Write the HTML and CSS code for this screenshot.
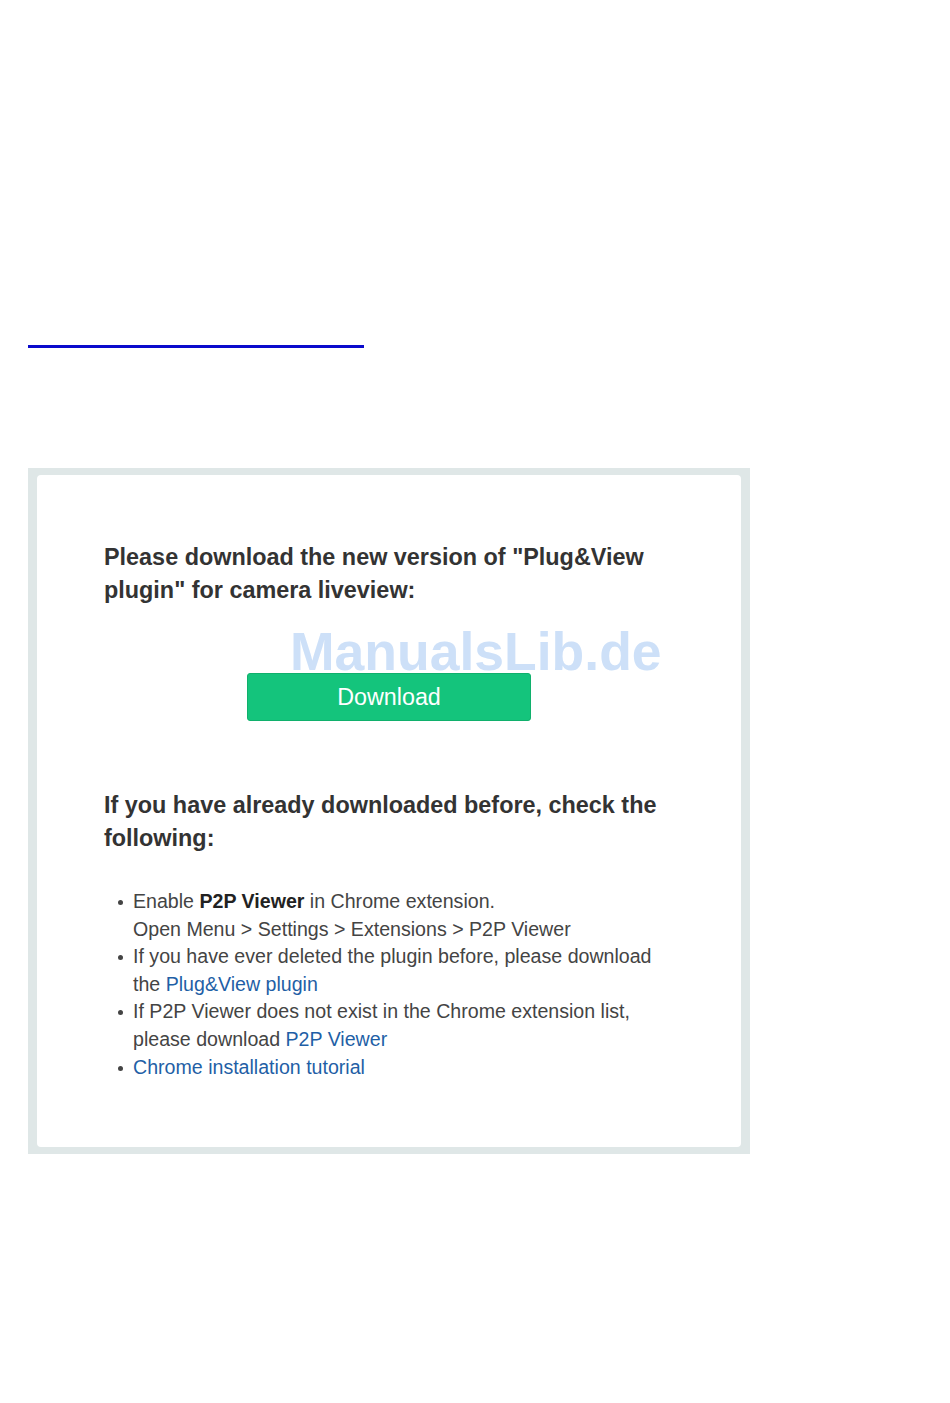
FILE: index.html
```html
<!DOCTYPE html>
<html lang="en">
<head>
    <meta charset="UTF-8">
    <meta name="viewport" content="width=device-width, initial-scale=1.0">
    <title>Plug&amp;View plugin</title>
    <link rel="stylesheet" href="styles.css">
</head>
<body>
    <div class="page">
        <div class="rule"></div>

        <div class="frame">
            <div class="card">
                <span class="watermark">ManualsLib.de</span>

                <h2>Please download the new version of "Plug&amp;View plugin" for camera liveview:</h2>

                <div class="btn-row">
                    <a href="#" class="btn">Download</a>
                </div>

                <h2 class="second">If you have already downloaded before, check the following:</h2>

                <ul class="checks">
                    <li>Enable <b>P2P Viewer</b> in Chrome extension.<br>Open Menu &gt; Settings &gt; Extensions &gt; P2P Viewer</li>
                    <li>If you have ever deleted the plugin before, please download the <a href="#">Plug&amp;View plugin</a></li>
                    <li>If P2P Viewer does not exist in the Chrome extension list, please download <a href="#">P2P Viewer</a></li>
                    <li><a href="#">Chrome installation tutorial</a></li>
                </ul>
            </div>
        </div>
    </div>
</body>
</html>
```

FILE: styles.css
```css
body, html {
    margin: 0;
    padding: 0;
    background-color: #fff;
    font-family: 'Liberation Sans', Arial, sans-serif;
    color: #333;
}

.page {
    padding: 0 28px;
}

.rule {
    margin-top: 345px;
    width: 336px;
    height: 3px;
    background: #0a0acc;
}

.frame {
    margin-top: 120px;
    width: 704px;
    padding: 7px 9px;
    background: #dfe7e7;
}

.card {
    position: relative;
    background: #fff;
    border-radius: 4px;
    padding: 66px 67px 66px 67px;
}

.watermark {
    position: absolute;
    left: 253px;
    top: 146px;
    font-size: 53.5px;
    font-weight: bold;
    color: #cde0f8;
    white-space: nowrap;
}

h2 {
    margin: 0;
    font-size: 23.4px;
    line-height: 33px;
    font-weight: bold;
    color: #333;
}

h2.second {
    margin-top: 68px;
}

.btn-row {
    position: relative;
    text-align: center;
    margin-top: 66px;
}

.btn {
    display: inline-block;
    width: 282px;
    height: 46px;
    line-height: 46px;
    border: 1px solid #10b06c;
    border-radius: 3px;
    background: #14c47c;
    color: #fff;
    font-size: 23.3px;
    text-decoration: none;
}

.checks {
    margin: 33px 0 0;
    padding-left: 29px;
    list-style: none;
    font-size: 19.6px;
    line-height: 27.6px;
    color: #444;
}

.checks li {
    position: relative;
}

.checks li::before {
    content: '';
    position: absolute;
    left: -15px;
    top: 12px;
    width: 5px;
    height: 5px;
    border-radius: 50%;
    background: #444;
}

.checks b {
    color: #222;
}

.checks a {
    color: #1f5fa6;
    text-decoration: none;
}
```
